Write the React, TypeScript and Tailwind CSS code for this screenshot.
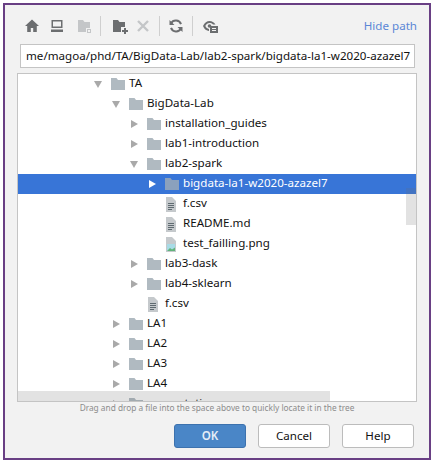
const font = "font-['Noto_Sans',sans-serif]";

function Arrow({ open, selected }: { open?: boolean; selected?: boolean }) {
  const color = selected ? '#ffffff' : '#a9a9a9';
  return (
    <svg width="10" height="10" viewBox="0 0 10 10" className="block">
      {open ? <path d="M1 2h8L5 9z" fill={color} /> : <path d="M2 1l7 4-7 4z" fill={color} />}
    </svg>
  );
}

function Folder({ selected }: { selected?: boolean }) {
  return (
    <svg width="14" height="12" viewBox="0 0 14 12" className="block">
      <path d="M0 0h5.5l1.500 2h7v10H0z" fill={selected ? '#8ba1bd' : '#b0bac1'} />
    </svg>
  );
}

function TextFile() {
  return (
    <svg width="10" height="15" viewBox="0 0 10 15" className="block">
      <path d="M0 0h6l4 4v11H0z" fill="#c5c9cc" />
      <path d="M2 6h6v1H2zM2 8h6v1H2zM2 10h6v1H2zM2 12h4v1H2z" fill="#5f6a70" />
    </svg>
  );
}

function ImageFile() {
  return (
    <svg width="10" height="15" viewBox="0 0 10 15" className="block">
      <path d="M0 0h6l4 4v11H0z" fill="#c5c9cc" />
      <rect x="1" y="7" width="8" height="7" fill="#a8dbe6" />
      <path d="M1 14l3-3 2 1.500 3-2V14z" fill="#62b37b" />
    </svg>
  );
}

type Row = { label: string; depth: number; kind: 'folder' | 'text' | 'image'; open?: boolean; selected?: boolean };

const rows: Row[] = [
  { label: 'TA', depth: 0, kind: 'folder', open: true },
  { label: 'BigData-Lab', depth: 1, kind: 'folder', open: true },
  { label: 'installation_guides', depth: 2, kind: 'folder' },
  { label: 'lab1-introduction', depth: 2, kind: 'folder' },
  { label: 'lab2-spark', depth: 2, kind: 'folder', open: true },
  { label: 'bigdata-la1-w2020-azazel7', depth: 3, kind: 'folder', selected: true },
  { label: 'f.csv', depth: 3, kind: 'text' },
  { label: 'README.md', depth: 3, kind: 'text' },
  { label: 'test_failling.png', depth: 3, kind: 'image' },
  { label: 'lab3-dask', depth: 2, kind: 'folder' },
  { label: 'lab4-sklearn', depth: 2, kind: 'folder' },
  { label: 'f.csv', depth: 2, kind: 'text' },
  { label: 'LA1', depth: 1, kind: 'folder' },
  { label: 'LA2', depth: 1, kind: 'folder' },
  { label: 'LA3', depth: 1, kind: 'folder' },
  { label: 'LA4', depth: 1, kind: 'folder' },
  { label: 'presentation', depth: 1, kind: 'folder' },
];

function TreeRow({ row }: { row: Row }) {
  return (
    <div
      className={`flex h-5 shrink-0 items-center ${row.selected ? 'bg-[#3875d7] text-white' : 'text-[#111111]'}`}
      style={{ paddingLeft: 75 + row.depth * 18 }}
    >
      <span className="flex w-[18px] shrink-0 items-center">
        {row.kind === 'folder' && <Arrow open={row.open} selected={row.selected} />}
      </span>
      <span className={`flex shrink-0 items-center ${row.kind === 'folder' ? 'w-[18px]' : 'w-[18px] pl-px'}`}>
        {row.kind === 'folder' && <Folder selected={row.selected} />}
        {row.kind === 'text' && <TextFile />}
        {row.kind === 'image' && <ImageFile />}
      </span>
      <span className="whitespace-nowrap pb-[2px]">{row.label}</span>
    </div>
  );
}

function ToolIcon({ children, className }: { children: React.ReactNode; className: string }) {
  return (
    <svg width="16" height="16" viewBox="0 0 16 16" className={`block shrink-0 ${className}`}>
      {children}
    </svg>
  );
}

function Sep({ className }: { className: string }) {
  return <span className={`h-5 w-px shrink-0 bg-[#cfcfcf] ${className}`} />;
}

export default function App() {
  return (
    <div className={`h-[460px] w-[432px] overflow-hidden bg-white pl-[3px] pt-[3px] ${font} text-[11.6px]`}>
      <div className="flex h-[457px] w-[428px] flex-col border-[2px] border-[#693f84] bg-[#f2f2f2]">
        {/* toolbar */}
        <div className="flex h-9 shrink-0 items-center pl-[19px] pr-[12px] pt-[6px]">
          <ToolIcon className="">
            <path d="M8 1.500L1 8h2.200v6h3.600v-4h2.400v4h3.600V8H15z" fill="#6c6e70" />
          </ToolIcon>
          <ToolIcon className="ml-[9px]">
            <path d="M2.500 2h11v8h-11zM4 3.500v5h8v-5zM2 11.500h12V14H2z" fill="#6c6e70" fillRule="evenodd" />
          </ToolIcon>
          <ToolIcon className="ml-[11px]">
            <path d="M2 2h5l1.500 2H14v6H10v4H2z" fill="#c4c6c8" />
            <path d="M11 11h4v4h-4zM12 12v2h2v-2z" fill="#c4c6c8" fillRule="evenodd" />
          </ToolIcon>
          <Sep className="ml-[8px]" />
          <ToolIcon className="ml-[11px]">
            <path d="M1 2h5l1.500 2H13v5H9v5H1z" fill="#6c6e70" />
            <path d="M12 10v2h-2v2h2v2h2v-2h2v-2h-2v-2z" fill="#6c6e70" />
          </ToolIcon>
          <ToolIcon className="ml-[7px]">
            <path d="M3 3l10 10M13 3L3 13" stroke="#c4c6c8" strokeWidth="2.400" fill="none" />
          </ToolIcon>
          <Sep className="ml-[8px]" />
          <ToolIcon className="ml-[8px]">
            <path d="M13 6.200A5.500 5.500 0 0 0 3 5.500M3 9.800a5.500 5.500 0 0 0 10 .7" stroke="#6c6e70" strokeWidth="2" fill="none" />
            <path d="M1.500 2v5h5zM14.500 14V9h-5z" fill="#6c6e70" />
          </ToolIcon>
          <Sep className="ml-[8px]" />
          <ToolIcon className="ml-[9px]">
            <path d="M1 8c1.600-3.600 4-5 6.500-5S12 4.200 13.500 6.500H11C10 5.400 8.800 5 7.500 5 5.800 5 4.300 6 3.300 8c.8 1.600 2 2.600 3.700 2.900V13C4.500 12.800 2.400 11.300 1 8z" fill="#6c6e70" />
            <circle cx="7.500" cy="8" r="1.800" fill="#6c6e70" />
            <path d="M8 8h8v7H8zM10 10v1h4v-1zM10 12v1h4v-1z" fill="#6c6e70" fillRule="evenodd" />
          </ToolIcon>
          <span className="ml-auto text-[11.6px] leading-[20px] text-[#5b87d6]">Hide path</span>
        </div>

        {/* path field */}
        <div className="ml-[15px] mt-[3px] flex h-6 w-[395px] shrink-0 items-center overflow-hidden whitespace-nowrap border border-[#c4c4c4] bg-white pl-[5px] text-[#111111]">
          me/magoa/phd/TA/BigData-Lab/lab2-spark/bigdata-la1-w2020-azazel7
        </div>

        {/* tree */}
        <div className="relative ml-[12px] mt-[5px] h-[329px] w-[400px] shrink-0 overflow-hidden border border-[#c4c4c4] bg-white">
          <div className="flex flex-col">
            {rows.map((row, i) => (
              <TreeRow key={i} row={row} />
            ))}
          </div>
          <div className="absolute right-0 top-[114px] h-[37px] w-[10px] bg-[#707070]/20" />
          <div className="absolute bottom-0 left-0 h-[10px] w-[312px] bg-[#707070]/20" />
        </div>

        {/* hint */}
        <div className="h-[15px] shrink-0 text-center text-[8.300px] leading-[12px] text-[#8c8c8c]">
          Drag and drop a file into the space above to quickly locate it in the tree
        </div>

        {/* buttons */}
        <div className="ml-[169px] mt-[7px] flex shrink-0 gap-[12px]">
          <button className="h-6 w-[72px] rounded-[3px] border border-[#3d72ae] bg-[#4a86c7] font-semibold text-[#e6eef7]">OK</button>
          <button className="h-6 w-[72px] rounded-[3px] border border-[#bcbcbc] bg-white text-[#111111]">Cancel</button>
          <button className="h-6 w-[72px] rounded-[3px] border border-[#bcbcbc] bg-white text-[#111111]">Help</button>
        </div>
      </div>
    </div>
  );
}
